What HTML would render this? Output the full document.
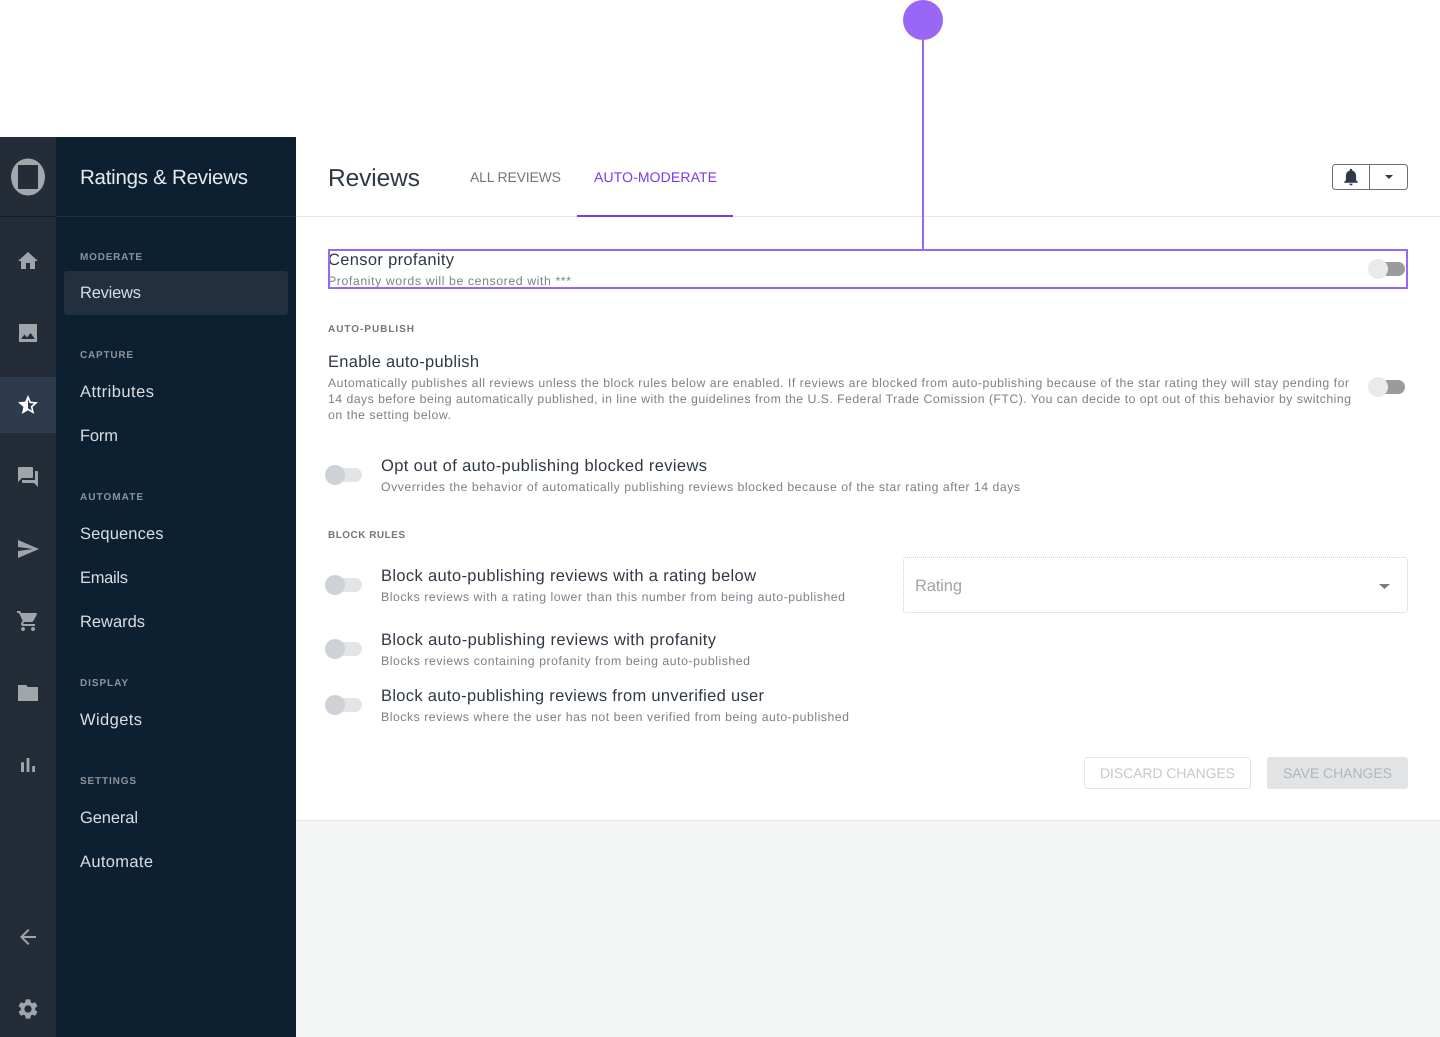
<!DOCTYPE html>
<html lang="en">
<head>
<meta charset="utf-8">
<title>Ratings &amp; Reviews</title>
<style>
html,body{margin:0;padding:0;width:1440px;height:1037px;overflow:hidden;background:#fff}
svg{display:block}
text{font-family:"Liberation Sans",sans-serif;text-rendering:geometricPrecision}
.nav{font-size:16.5px;fill:#d9dde1}
.sec{font-size:10px;font-weight:700;fill:#8b949d}
.h{font-size:16.5px;fill:#2f3945}
.s{font-size:12.3px;fill:#7b8289}
.lbl{font-size:10px;font-weight:700;fill:#71777e}
.ic{fill:#a0a5aa}
</style>
</head>
<body>
<svg width="1440" height="1037" viewBox="0 0 1440 1037" xmlns="http://www.w3.org/2000/svg">
  <rect width="1440" height="1037" fill="#fff"/>
  <rect x="296" y="821" width="1144" height="216" fill="#f4f6f6"/>
  <rect x="296" y="820" width="1144" height="1" fill="#e3e5e6"/>
  <rect x="296" y="216" width="1144" height="1" fill="#e6e7e8"/>

  <!-- rail -->
  <rect x="0" y="137" width="56" height="900" fill="#232c37"/>
  <rect x="0" y="216" width="56" height="1" fill="#171e27"/>
  <rect x="0" y="377" width="56" height="56" fill="#2d3b4c"/>
  <ellipse cx="28" cy="177" rx="17" ry="18.5" fill="#a3a7ab"/>
  <rect x="18" y="165" width="20" height="24" fill="#232c37"/>

  <g class="ic">
    <path transform="translate(16 249)" d="M10 20v-6h4v6h5v-8h3L12 3 2 12h3v8z"/>
    <path transform="translate(16 321)" d="M21 21V3H3v18h18zM8.500 13.500l2.500 3.010L14.500 12l4.500 6H5l3.500-4.500z"/>
    <path transform="translate(16 465)" d="M21 6h-2v9H6v2c0 .55.45 1 1 1h11l4 4V7c0-.55-.45-1-1-1zm-4 6V3c0-.55-.45-1-1-1H3c-.55 0-1 .45-1 1v14l4-4h10c.55 0 1-.45 1-1z"/>
    <path transform="translate(16 537)" d="M2.010 21L23 12 2.010 3 2 10l15 2-15 2z"/>
    <path transform="translate(16 609)" d="M7 18c-1.100 0-1.990.9-1.990 2S5.900 22 7 22s2-.9 2-2-.9-2-2-2zM1 2v2h2l3.600 7.590-1.350 2.450c-.16.28-.25.61-.25.96 0 1.100.9 2 2 2h12v-2H7.420c-.14 0-.25-.11-.25-.25l.03-.12.9-1.630h7.450c.75 0 1.410-.41 1.750-1.030l3.580-6.490c.08-.14.12-.31.12-.48 0-.55-.45-1-1-1H5.210l-.94-2H1zm16 16c-1.100 0-1.990.9-1.990 2s.89 2 1.990 2 2-.9 2-2-.9-2-2-2z"/>
    <path transform="translate(16 681)" d="M10 4H2v16h20V6H12l-2-2z"/>
    <path transform="translate(16 753)" d="M5 9.200h3V19H5zM10.600 5h2.800v14h-2.800zm5.600 8H19v6h-2.800z"/>
    <path transform="translate(16 925)" d="M20 11H7.830l5.590-5.590L12 4l-8 8 8 8 1.410-1.410L7.830 13H20v-2z"/>
    <path transform="translate(16 997)" d="M19.140 12.940c.04-.3.06-.61.06-.94 0-.32-.02-.64-.07-.94l2.030-1.580c.18-.14.23-.41.12-.61l-1.920-3.320c-.12-.22-.37-.29-.59-.22l-2.390.96c-.5-.38-1.030-.7-1.620-.94l-.36-2.540c-.04-.24-.24-.41-.48-.41h-3.840c-.24 0-.43.17-.47.41l-.36 2.540c-.59.24-1.130.57-1.620.94l-2.390-.96c-.22-.08-.47 0-.59.22L2.740 8.870c-.12.21-.08.47.12.61l2.030 1.580c-.05.3-.09.63-.09.94s.02.64.07.94l-2.030 1.580c-.18.14-.23.41-.12.61l1.920 3.320c.12.22.37.29.59.22l2.390-.96c.5.38 1.030.7 1.620.94l.36 2.540c.05.24.24.41.48.41h3.840c.24 0 .44-.17.47-.41l.36-2.540c.59-.24 1.130-.56 1.620-.94l2.390.96c.22.08.47 0 .59-.22l1.920-3.320c.12-.22.07-.47-.12-.61l-2.010-1.580zM12 15.600c-1.980 0-3.600-1.620-3.600-3.600s1.620-3.600 3.600-3.600 3.600 1.620 3.600 3.600-1.620 3.600-3.600 3.600z"/>
  </g>
  <path transform="translate(16 393)" fill="#fff" d="M22 9.240l-7.190-.62L12 2 9.190 8.630 2 9.240l5.460 4.730L5.820 21 12 17.270 18.180 21l-1.630-7.030L22 9.240zM12 15.400V6.100l1.710 4.040 4.380.38-3.320 2.880 1 4.280L12 15.400z"/>

  <!-- sidebar panel -->
  <rect x="56" y="137" width="240" height="900" fill="#0d2031"/>
  <rect x="56" y="216" width="240" height="1" fill="#212f3e"/>
  <rect x="64" y="271" width="224" height="44" rx="3" fill="#212f3f"/>

  <text x="80" y="184" font-size="20.5" fill="#e6e9ec" textLength="168" lengthAdjust="spacing">Ratings &amp; Reviews</text>
  <text class="sec" x="80" y="260" textLength="62" lengthAdjust="spacing">MODERATE</text>
  <text class="nav" x="80" y="298" textLength="61" lengthAdjust="spacing">Reviews</text>
  <text class="sec" x="80" y="358" textLength="53" lengthAdjust="spacing">CAPTURE</text>
  <text class="nav" x="80" y="397" textLength="74" lengthAdjust="spacing">Attributes</text>
  <text class="nav" x="80" y="441" textLength="38" lengthAdjust="spacing">Form</text>
  <text class="sec" x="80" y="500" textLength="63" lengthAdjust="spacing">AUTOMATE</text>
  <text class="nav" x="80" y="539" textLength="83.5" lengthAdjust="spacing">Sequences</text>
  <text class="nav" x="80" y="583" textLength="48" lengthAdjust="spacing">Emails</text>
  <text class="nav" x="80" y="627" textLength="65" lengthAdjust="spacing">Rewards</text>
  <text class="sec" x="80" y="686" textLength="48" lengthAdjust="spacing">DISPLAY</text>
  <text class="nav" x="80" y="725" textLength="62" lengthAdjust="spacing">Widgets</text>
  <text class="sec" x="80" y="784" textLength="56" lengthAdjust="spacing">SETTINGS</text>
  <text class="nav" x="80" y="823" textLength="58" lengthAdjust="spacing">General</text>
  <text class="nav" x="80" y="867" textLength="73" lengthAdjust="spacing">Automate</text>

  <!-- header -->
  <text x="328" y="186" font-size="24.5" fill="#2f3945" textLength="92" lengthAdjust="spacing">Reviews</text>
  <text x="470" y="182" font-size="14" fill="#74797f" textLength="91" lengthAdjust="spacing">ALL REVIEWS</text>
  <text x="594" y="182" font-size="14" fill="#7c3aed" textLength="123" lengthAdjust="spacing">AUTO-MODERATE</text>
  <rect x="577" y="215" width="156" height="2" fill="#7c3aed"/>

  <rect x="1332.5" y="164.5" width="75" height="25" rx="3" fill="#fff" stroke="#69727c"/>
  <rect x="1369" y="164" width="1" height="26" fill="#69727c"/>
  <path transform="translate(1340.8 166.6) scale(.85)" fill="#2f3945" d="M12 22c1.100 0 2-.9 2-2h-4c0 1.100.9 2 2 2zm6-6v-5c0-3.070-1.630-5.640-4.500-6.320V4c0-.83-.67-1.500-1.500-1.500s-1.500.67-1.500 1.500v.68C7.640 5.360 6 7.920 6 11v5l-2 2v1h16v-1l-2-2z"/>
  <path d="M1385 175h8l-4 4z" fill="#2f3945"/>

  <!-- censor -->
  <text class="h" x="328" y="265" textLength="126" lengthAdjust="spacing">Censor profanity</text>
  <text class="s" x="328" y="285" textLength="243" lengthAdjust="spacing">Profanity words will be censored with ***</text>
  <rect x="1379" y="262" width="26" height="14" rx="7" fill="#9b9b9b"/>
  <circle cx="1378" cy="269" r="10" fill="#e9eaeb"/>

  <!-- auto publish -->
  <text class="lbl" x="328" y="332" textLength="86" lengthAdjust="spacing">AUTO-PUBLISH</text>
  <text class="h" x="328" y="367" textLength="151" lengthAdjust="spacing">Enable auto-publish</text>
  <text class="s" x="328" y="387" textLength="1021" lengthAdjust="spacing">Automatically publishes all reviews unless the block rules below are enabled. If reviews are blocked from auto-publishing because of the star rating they will stay pending for</text>
  <text class="s" x="328" y="403" textLength="1023" lengthAdjust="spacing">14 days before being automatically published, in line with the guidelines from the U.S. Federal Trade Comission (FTC). You can decide to opt out of this behavior by switching</text>
  <text class="s" x="328" y="419" textLength="123" lengthAdjust="spacing">on the setting below.</text>
  <rect x="1379" y="380" width="26" height="14" rx="7" fill="#9b9b9b"/>
  <circle cx="1378" cy="387" r="10" fill="#e9eaeb"/>

  <rect x="335" y="468" width="27" height="14" rx="7" fill="#e2e4e6"/>
  <circle cx="335" cy="475" r="10" fill="#ced1d6"/>
  <text class="h" x="381" y="471" textLength="326" lengthAdjust="spacing">Opt out of auto-publishing blocked reviews</text>
  <text class="s" x="381" y="491" textLength="639" lengthAdjust="spacing">Ovverrides the behavior of automatically publishing reviews blocked because of the star rating after 14 days</text>

  <!-- block rules -->
  <text class="lbl" x="328" y="538" textLength="77" lengthAdjust="spacing">BLOCK RULES</text>

  <rect x="335" y="578" width="27" height="14" rx="7" fill="#e2e4e6"/>
  <circle cx="335" cy="585" r="10" fill="#ced1d6"/>
  <text class="h" x="381" y="581" textLength="375" lengthAdjust="spacing">Block auto-publishing reviews with a rating below</text>
  <text class="s" x="381" y="601" textLength="464" lengthAdjust="spacing">Blocks reviews with a rating lower than this number from being auto-published</text>

  <rect x="335" y="642" width="27" height="14" rx="7" fill="#e2e4e6"/>
  <circle cx="335" cy="649" r="10" fill="#ced1d6"/>
  <text class="h" x="381" y="645" textLength="335" lengthAdjust="spacing">Block auto-publishing reviews with profanity</text>
  <text class="s" x="381" y="665" textLength="369" lengthAdjust="spacing">Blocks reviews containing profanity from being auto-published</text>

  <rect x="335" y="698" width="27" height="14" rx="7" fill="#e2e4e6"/>
  <circle cx="335" cy="705" r="10" fill="#ced1d6"/>
  <text class="h" x="381" y="701" textLength="383" lengthAdjust="spacing">Block auto-publishing reviews from unverified user</text>
  <text class="s" x="381" y="721" textLength="468" lengthAdjust="spacing">Blocks reviews where the user has not been verified from being auto-published</text>

  <!-- select -->
  <path d="M1396 557.500H906q-2.500 0-2.500 2.500v50q0 2.500 2.500 2.500h490" fill="none" stroke="#cfd2d4" stroke-dasharray="1 1"/>
  <path d="M1396 557.500h8.500q3 0 3 3v49q0 3-3 3H1396" fill="none" stroke="#e3e5e6"/>
  <text x="915" y="591" font-size="16.5" fill="#a0a4a8" textLength="47" lengthAdjust="spacing">Rating</text>
  <path d="M1379 584h11l-5.500 5z" fill="#777d84"/>

  <!-- buttons -->
  <rect x="1084.500" y="757.500" width="166" height="31" rx="3" fill="#fff" stroke="#e3e5e6"/>
  <text x="1100" y="778" font-size="14" fill="#c6c9cb" textLength="135" lengthAdjust="spacing">DISCARD CHANGES</text>
  <rect x="1267" y="757" width="141" height="32" rx="3" fill="#e2e3e5"/>
  <text x="1283" y="778" font-size="14" fill="#b3b6b9" textLength="109" lengthAdjust="spacing">SAVE CHANGES</text>

  <!-- annotation -->
  <circle cx="923" cy="20" r="20" fill="#9966f5"/>
  <rect x="922" y="40" width="2" height="210" fill="#9966f5"/>
  <rect x="329" y="250" width="1078" height="38" fill="none" stroke="#9966f5" stroke-width="2"/>
</svg>
</body>
</html>
